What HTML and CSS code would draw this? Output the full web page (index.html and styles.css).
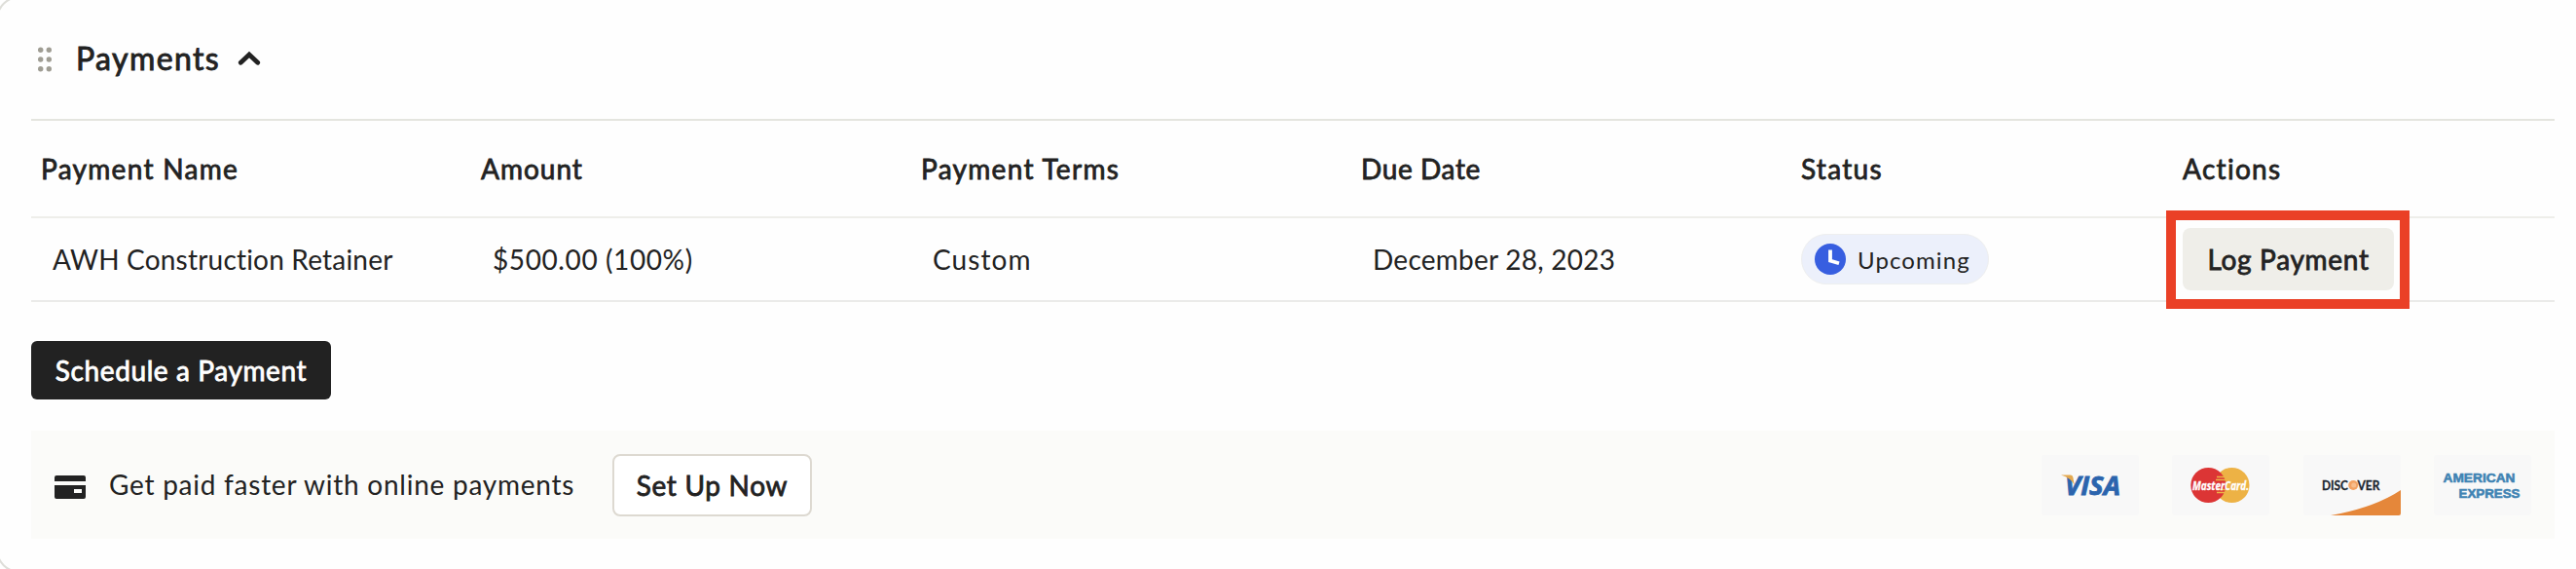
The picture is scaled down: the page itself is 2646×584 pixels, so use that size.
FILE: index.html
```html
<!DOCTYPE html>
<html lang="en">
<head>
<meta charset="utf-8">
<title>Payments</title>
<link rel="stylesheet" href="styles.css">
</head>
<body>
<section class="card">
  <header class="card-header">
    <svg class="drag" width="16" height="28" viewBox="0 0 16 28"><g fill="#9f9d93"><circle cx="3.7" cy="4.3" r="2.7"/><circle cx="12.3" cy="4.3" r="2.7"/><circle cx="3.7" cy="14" r="2.7"/><circle cx="12.3" cy="14" r="2.7"/><circle cx="3.7" cy="23.7" r="2.7"/><circle cx="12.3" cy="23.7" r="2.7"/></g></svg>
    <h2 class="title">Payments</h2>
    <svg class="chevron" width="24" height="18" viewBox="0 0 24 18"><path d="M3.3 13.3 12 5l8.700 8.300" fill="none" stroke="#222" stroke-width="4.800" stroke-linecap="round" stroke-linejoin="miter"/></svg>
  </header>
  <div class="row head">
    <div class="wide">Payment Name</div><div>Amount</div><div class="wide">Payment Terms</div><div class="tight">Due Date</div><div class="wide">Status</div><div class="wide">Actions</div>
  </div>
  <div class="row body">
    <div class="name">AWH Construction Retainer</div>
    <div class="amount">$500.00 (100%)</div>
    <div class="terms">Custom</div>
    <div class="date">December 28, 2023</div>
    <div class="status">
      <span class="pill">
        <svg width="32" height="32" viewBox="0 0 32 32"><circle cx="16" cy="16" r="16" fill="#375ee0"/><path d="M16 6.500v11l9 2.700" fill="none" stroke="#fff" stroke-width="3.800"/></svg>
        <span>Upcoming</span>
      </span>
    </div>
    <div class="action"><button class="btn btn-soft">Log Payment</button></div>
  </div>
  <div class="schedule"><button class="btn btn-dark">Schedule a Payment</button></div>
  <div class="banner">
    <svg width="32" height="24" viewBox="0 0 32 24"><path fill="#222" fill-rule="evenodd" d="M2 0h28a2 2 0 0 1 2 2v4H0V2a2 2 0 0 1 2-2ZM0 10h32v12a2 2 0 0 1-2 2H2a2 2 0 0 1-2-2Zm20 4v4h8v-4Z"/></svg>
    <span class="pitch">Get paid faster with online payments</span>
    <button class="btn btn-outline">Set Up Now</button>
    <div class="logos">
      <svg width="100" height="62" viewBox="0 0 100 62">
        <rect width="100" height="62" rx="2" fill="#f8f8f8"/>
        <text class="visa" x="24" y="40.500" textLength="57" lengthAdjust="spacingAndGlyphs">VISA</text>
        <path d="M20 20.500h9.500q2.500 0 3 3l1.200 7.500q-3.500-7.500-13.700-10.500Z" fill="#e3a84f"/>
      </svg>
      <svg width="100" height="62" viewBox="0 0 100 62">
        <rect width="100" height="62" rx="2" fill="#f8f8f8"/>
        <circle cx="61.500" cy="31" r="18" fill="#edb245"/>
        <circle cx="37.300" cy="31" r="18" fill="#dc3535"/>
        <path d="M46 22.500h8M45 25.500h10M45 35.500h10M46 38.500h8" stroke="#edb245" stroke-width="1.300"/>
        <text class="mc" x="21" y="35.500" textLength="58" lengthAdjust="spacingAndGlyphs">MasterCard.</text>
      </svg>
      <svg width="100" height="62" viewBox="0 0 100 62">
        <rect width="100" height="62" rx="2" fill="#f8f8f8"/>
        <path d="M28 62Q73 54 100 36v24a2 2 0 0 1-2 2Z" fill="#e5873a"/>
        <text class="disc" x="19" y="35.500" textLength="27" lengthAdjust="spacingAndGlyphs">DISC</text>
        <circle cx="51.200" cy="31" r="5" fill="#f2a263"/><circle cx="51.700" cy="31" r="2.500" fill="#f7bd8c"/>
        <text class="disc" x="55.500" y="35.500" textLength="23" lengthAdjust="spacingAndGlyphs">VER</text>
      </svg>
      <svg width="100" height="62" viewBox="0 0 100 62">
        <rect width="100" height="62" rx="2" fill="#f8f8f8"/>
        <text class="amex" x="9.500" y="27.700" textLength="74" lengthAdjust="spacingAndGlyphs">AMERICAN</text>
        <text class="amex" x="25.500" y="44" textLength="63" lengthAdjust="spacingAndGlyphs">EXPRESS</text>
      </svg>
    </div>
  </div>
</section>
</body>
</html>
```
FILE: styles.css
```css
* { box-sizing: border-box; }
body { margin: 0; background: #fff; color: #222; font: 400 28px/1.2 Lato, "Open Sans", sans-serif; overflow: hidden; }
.card { margin: -4px -48px 0 -4px; width: 2694px; height: 592px; padding: 2px 64px 0 34px; border: 2px solid #deded9; border-radius: 24px; background: #fefefe; }
.card-header { display: flex; align-items: center; height: 122px; padding-left: 6px; }
.title { margin: 0 0 2px 24px; font-size: 32px; font-weight: 400; letter-spacing: 1.4px; -webkit-text-stroke: .9px #222; }
.chevron { margin: -3px 0 0 18px; }
.row { display: grid; grid-template-columns: 452px 452px 452px 452px 392px 392px; align-items: center; }
.row > div { padding: 1px 0 0 10px; white-space: nowrap; }
.head { height: 102px; border-top: 2px solid #e4e5df; border-bottom: 2px solid #eeeeea; letter-spacing: 1px; -webkit-text-stroke: .8px #222; }
.head .wide { letter-spacing: 1.3px; }
.head .tight { letter-spacing: .6px; }
.body { height: 86px; border-bottom: 2px solid #ebebe9; }
.body > .name, .body > .amount, .body > .terms, .body > .date { padding-left: 22px; }
.name { letter-spacing: .2px; }
.date { letter-spacing: .25px; }
.amount { letter-spacing: .6px; }
.terms { letter-spacing: 1.1px; }
.body > .status, .body > .action { padding-top: 0; }
.pill { display: flex; align-items: center; gap: 12px; width: 193px; height: 52px; padding-left: 13px; border-radius: 26px; border: 1px solid #eeefef; background: #ecf0fb; font-size: 24px; letter-spacing: 1.1px; }
.pill span { padding-top: 3px; }
.action { position: relative; }
/* highlight frame around the action */
.action::after { content: ""; position: absolute; box-sizing: border-box; left: -7px; top: -18px; width: 250px; height: 101px; border: 10px solid #ea4026; }
.btn { display: block; font: inherit; color: #222; border: 0; border-radius: 8px; padding: 1px 0 0; letter-spacing: .7px; white-space: nowrap; -webkit-text-stroke: .8px currentColor; }
.btn-soft { width: 217px; height: 64px; background: #efeee9; }
.schedule { padding-top: 40px; height: 132px; }
.btn-dark { width: 308px; height: 60px; border-radius: 6px; background: #222; color: #fff; letter-spacing: .6px; }
.banner { display: flex; align-items: center; height: 111px; padding: 0 24px; background: #fbfbf9; }
.banner > svg { margin-top: 5px; }
.pitch { margin-left: 24px; padding-top: 1px; width: 517px; letter-spacing: .75px; white-space: nowrap; }
.btn-outline { width: 205px; height: 64px; padding-top: 2px; border: 2px solid #ddd9d1; background: #fff; }
.logos { display: flex; gap: 34.500px; margin-left: auto; }
.visa { font: italic 700 27px "Open Sans", sans-serif; fill: #2b64ad; stroke: #2b64ad; stroke-width: .8px; }
.mc { font: italic 700 12.500px "Open Sans", sans-serif; fill: #fff; stroke: #fff; stroke-width: .3px; }
.disc { font: 700 13.500px Lato, sans-serif; fill: #1c2730; stroke: #1c2730; stroke-width: .3px; }
.amex { font: 700 13.500px "Liberation Sans", sans-serif; fill: #3f83b3; stroke: #3f83b3; stroke-width: .6px; }
```
